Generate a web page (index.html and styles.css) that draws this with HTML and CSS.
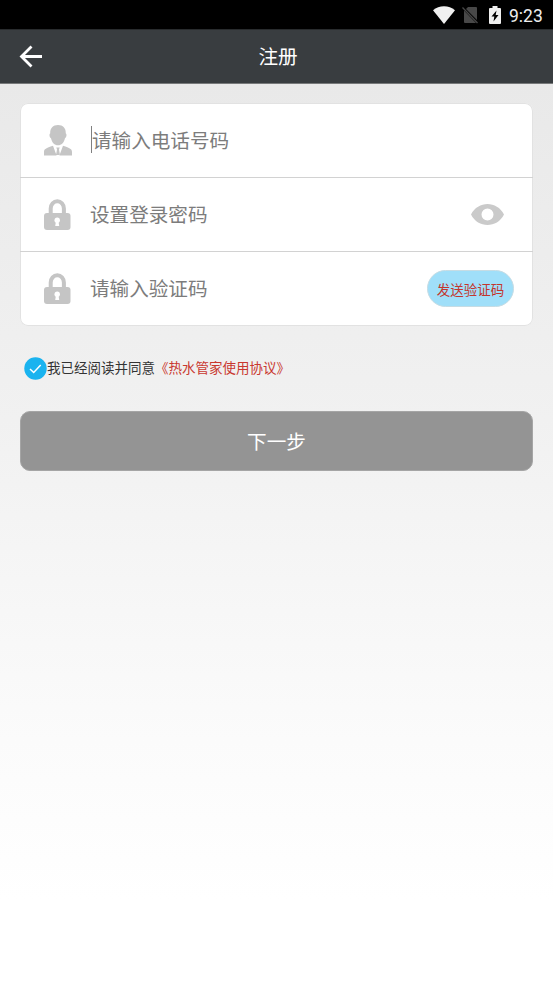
FILE: index.html
```html
<!DOCTYPE html>
<html lang="zh-CN">
<head>
<meta charset="utf-8">
<title>注册</title>
<link rel="stylesheet" href="styles.css">
</head>
<body>
<div class="status">
  <svg class="wifi" width="22" height="18" viewBox="0 0 22 18"><path d="M0 4.2C6-1 16-1 22 4.2L11 18Z" fill="#f0f0f0"/></svg>
  <svg class="sim" width="16" height="18" viewBox="0 0 16 18"><path d="M6 1H14a1 1 0 0 1 1 1v12L4 3zM2 4.500l12 12.500H3a1 1 0 0 1-1-1z" fill="#484848"/><path d="M.5 1.500L15.500 17" stroke="#484848" stroke-width="1.300"/></svg>
  <svg class="battery" width="12" height="18" viewBox="0 0 12 18"><path d="M3.500 0h5v2H11a1 1 0 0 1 1 1v14a1 1 0 0 1-1 1H1a1 1 0 0 1-1-1V3a1 1 0 0 1 1-1h2.500z" fill="#f0f0f0"/><path d="M7.500 4.500L2.500 10.500H5.300L4.500 15.500L9.500 9H6.700Z" fill="#000"/></svg>
  <span class="time">9:23</span>
</div>
<header class="bar">
  <svg class="back" width="24" height="24" viewBox="0 0 24 24"><path d="M12.500 1.500L2.500 11.500L12.500 21.500M2.500 11.500H23" fill="none" stroke="#fff" stroke-width="2.800"/></svg>
  <h1 class="title">注册</h1>
</header>
<main class="content">
  <section class="card">
    <div class="row">
      <svg class="icon" width="28" height="31" viewBox="0 0 28 31"><path d="M14 0C19 0 22 3 21.800 8.500C23 8.800 22.600 12.500 21 13.200C20 17.500 17.500 20.300 14 20.300S8 17.500 7 13.200C5.400 12.500 5 8.800 6.200 8.500C6 3 9 0 14 0Z" fill="#c5c5c5"/><path d="M9 20.800L12.600 30.500H0V27C0 24 2 23.300 9 20.800ZM19 20.800L15.400 30.500H28V27C28 24 26 23.300 19 20.800ZM12.300 22.500h3.400l-.7 2l1 5.500h-4l1-5.500z" fill="#c5c5c5"/></svg>
      <span class="cursor"></span>
      <span class="hint">请输入电话号码</span>
    </div>
    <div class="row">
      <svg class="icon" width="28" height="32" viewBox="0 0 28 32"><path d="M6.700 15V9.500a6.600 7.300 0 0 1 13.200 0V15" fill="none" stroke="#c5c5c5" stroke-width="4"/><rect y="14" width="26.500" height="17" rx="3" fill="#c5c5c5"/><circle cx="13.200" cy="21.200" r="2.700" fill="#fff"/><path d="M12 22h2.400l.8 5h-4z" fill="#fff"/></svg>
      <span class="hint">设置登录密码</span>
      <svg class="eye" width="33" height="22" viewBox="0 0 33 22"><path fill-rule="evenodd" d="M0 10.500C7-3.500 26-3.500 33 10.500C26 24.500 7 24.500 0 10.500ZM16.500 4.500a6 6 0 1 0 0 12a6 6 0 1 0 0-12Z" fill="#cacaca"/></svg>
    </div>
    <div class="row">
      <svg class="icon" width="28" height="32" viewBox="0 0 28 32"><path d="M6.700 15V9.500a6.600 7.300 0 0 1 13.200 0V15" fill="none" stroke="#c5c5c5" stroke-width="4"/><rect y="14" width="26.500" height="17" rx="3" fill="#c5c5c5"/><circle cx="13.200" cy="21.200" r="2.700" fill="#fff"/><path d="M12 22h2.400l.8 5h-4z" fill="#fff"/></svg>
      <span class="hint">请输入验证码</span>
      <button class="send">发送验证码</button>
    </div>
  </section>
  <div class="agree">
    <svg class="check" width="23" height="23" viewBox="0 0 23 23"><circle cx="11.500" cy="11.500" r="11.200" fill="#1ab3ef"/><path d="M6 12l3.700 3.500L16.700 8" fill="none" stroke="#fff" stroke-width="1.500"/></svg>
    <span class="agree-text">我已经阅读并同意<a class="terms">《热水管家使用协议》</a></span>
  </div>
  <button class="next">下一步</button>
</main>
</body>
</html>
```
FILE: styles.css
```css
* { box-sizing: border-box; }
body {
  margin: 0;
  height: 983px;
  overflow: hidden;
  font-family: Roboto, "Noto Sans CJK SC", sans-serif;
  background: linear-gradient(#e9e9e9 84px, #f1f1f1 420px, #fbfbfb 740px, #fff 900px);
}
button { border: 0; padding: 0; font-family: inherit; }
.status {
  display: flex;
  justify-content: flex-end;
  align-items: center;
  height: 29px;
  padding-right: 10px;
  background: #000;
}
.sim { margin-left: 7px; }
.battery { margin-left: 11px; }
.time {
  width: 34px;
  margin-left: 8px;
  font-size: 17.5px;
  line-height: 29px;
  padding-top: 3px;
  color: #eee;
  white-space: nowrap;
}
.bar {
  display: grid;
  grid-template-columns: 44px 1fr 44px;
  align-items: center;
  height: 55px;
  background: #393d40;
  border-top: 1px solid #292c2e;
  border-bottom: 1px solid #77797a;
}
.back { margin-left: 19px; }
.title {
  margin: 0;
  padding: 3px 0 0 3px;
  text-align: center;
  font-size: 19.6px;
  font-weight: 400;
  line-height: 28px;
  color: #fff;
}
.content { padding: 19px 20px 0; }
.card {
  height: 223px;
  background: #fff;
  border-radius: 8px;
  box-shadow: inset 0 0 0 1px #e2e2e2;
}
.row {
  display: flex;
  align-items: center;
  height: 74px;
  padding: 0 19px 0 24px;
}
.row + .row { border-top: 1px solid #d2d2d2; }
.icon { flex: none; width: 28px; }
.hint {
  margin-left: 18px;
  padding-top: 3px;
  font-size: 19.6px;
  line-height: 28px;
  color: #7c7c7c;
  white-space: nowrap;
}
.cursor {
  width: 1px;
  height: 27px;
  margin: 0 0 1px 19px;
  background: #808080;
}
.cursor + .hint { margin-left: 0; }
.eye { margin-left: auto; margin-right: 10px; }
.send {
  width: 87px;
  height: 37px;
  margin-left: auto;
  border: 1px solid #c6dce4;
  border-radius: 19px;
  background: #a0dff9;
  font-size: 13.5px;
  color: #c4362d;
}
.agree {
  display: flex;
  align-items: center;
  height: 23px;
  margin: 31px 0 0 4px;
}
.agree-text {
  padding-bottom: 2px;
  font-size: 13.5px;
  line-height: 20px;
  color: #333;
  white-space: nowrap;
}
.terms { color: #c9382f; }
.next {
  display: block;
  width: 100%;
  height: 60px;
  margin-top: 31px;
  padding-bottom: 2px;
  border: 1px solid #a5a5a5;
  border-radius: 10px;
  background: #949494;
  font-size: 19.6px;
  color: #fff;
}
```
